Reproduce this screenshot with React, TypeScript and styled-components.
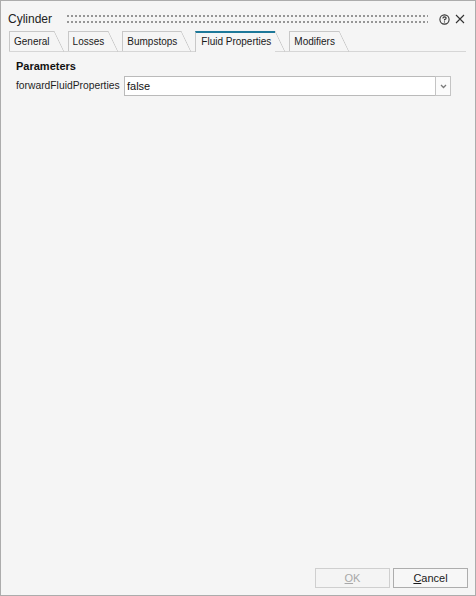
import React from "react";
import styled, { createGlobalStyle } from "styled-components";

const Global = createGlobalStyle`
  html, body { margin: 0; padding: 0; background: #f5f5f5; }
  body { font-family: "Liberation Sans", Arial, sans-serif; }
`;

const Window = styled.div`
  width: 476px;
  height: 596px;
  box-sizing: border-box;
  border: 1px solid #acacac;
  background: #f5f5f5;
  display: flex;
  flex-direction: column;
  color: #1b1b1b;
`;

const TitleBar = styled.div`
  height: 30px;
  box-sizing: border-box;
  padding: 6px 10px 0 7px;
  display: flex;
  align-items: center;
`;

const Title = styled.div`
  font-size: 12px;
  line-height: 16px;
  color: #222;
`;

const Grip = styled.div`
  flex: 1;
  height: 8px;
  margin: 0 11px 0 15px;
  background-image: linear-gradient(to bottom, transparent 2px, #f5f5f5 2px),
    linear-gradient(to right, #969696 2px, transparent 2px);
  background-size: 4px 6px, 4px 6px;
`;

const IconButton = styled.div<{ $size: number }>`
  width: ${(p) => p.$size}px;
  height: 11px;
  display: flex;
  align-items: center;
  justify-content: center;
  & + & { margin-left: 5px; }
`;

const TabStrip = styled.div`
  margin: 0 9px 0 8px;
  display: flex;
  align-items: flex-end;
  border-bottom: 1px solid #d6d6d6;
`;

const Tab = styled.div<{ $active?: boolean }>`
  position: relative;
  box-sizing: border-box;
  height: ${(p) => (p.$active ? "21px" : "20px")};
  margin-bottom: ${(p) => (p.$active ? "-1px" : "0")};
  margin-right: 14px;
  padding: ${(p) => (p.$active ? "2px 4px 0 5px" : "3px 4px 0 4px")};
  border-left: 1px solid #c8c8c8;
  border-top: ${(p) => (p.$active ? "2px solid #1d7899" : "1px solid #c8c8c8")};
  background: #f5f5f5;
  font-size: 10px;
  line-height: 14px;
  color: #1a1a1a;
  white-space: nowrap;
  &::after {
    content: "";
    position: absolute;
    top: ${(p) => (p.$active ? "-2px" : "-1px")};
    right: -10px;
    width: 10px;
    height: 21px;
    background: linear-gradient(
      to top right,
      transparent calc(50% - 0.7px),
      #c8c8c8 50%,
      transparent calc(50% + 0.7px)
    );
  }
`;

const Panel = styled.div`
  flex: 1;
  display: flex;
  flex-direction: column;
  padding: 0 24px 0 15px;
`;

const SectionTitle = styled.div`
  margin-top: 7px;
  font-size: 11px;
  line-height: 14px;
  font-weight: bold;
  color: #111;
`;

const FieldRow = styled.div`
  margin-top: 3px;
  display: grid;
  grid-template-columns: 108px 1fr;
  align-items: center;
`;

const Label = styled.div`
  font-size: 10.3px;
  line-height: 14px;
  color: #1e1e1e;
  white-space: nowrap;
`;

const Select = styled.div`
  height: 20px;
  display: flex;
  box-sizing: border-box;
`;

const Value = styled.div`
  flex: 1;
  box-sizing: border-box;
  border: 1px solid #bababa;
  border-right: none;
  background: #ffffff;
  font-size: 11px;
  line-height: 18px;
  padding-left: 2px;
  color: #111;
`;

const DropButton = styled.div`
  width: 16px;
  box-sizing: border-box;
  border: 1px solid #c4c4c4;
  background: #fbfbfb;
  display: flex;
  align-items: center;
  justify-content: center;
`;

const Footer = styled.div`
  display: flex;
  justify-content: flex-end;
  gap: 3px;
  padding: 0 7px 7px 0;
`;

const Button = styled.div<{ $disabled?: boolean }>`
  width: 75px;
  height: 20px;
  box-sizing: border-box;
  border: 1px solid ${(p) => (p.$disabled ? "#cfcfcf" : "#adadad")};
  background: ${(p) => (p.$disabled ? "#f4f4f4" : "#f7f7f7")};
  color: ${(p) => (p.$disabled ? "#a8a8a8" : "#1a1a1a")};
  font-size: 11px;
  line-height: 18px;
  text-align: center;
  & u { text-decoration-thickness: 1px; text-underline-offset: 1px; }
`;

export default function App() {
  return (
    <>
      <Global />
      <Window>
        <TitleBar>
          <Title>Cylinder</Title>
          <Grip />
          <IconButton $size={11}>
            <svg width="11" height="11" viewBox="0 0 11 11">
              <circle cx="5.5" cy="5.5" r="4.6" fill="none" stroke="#333" strokeWidth="1.1" />
              <path d="M3.9 4.4 Q3.9 2.9 5.5 2.9 Q7.1 2.9 7.1 4.2 Q7.1 5.1 5.5 5.6 L5.5 6.6" fill="none" stroke="#333" strokeWidth="1.1" />
              <rect x="4.95" y="7.4" width="1.1" height="1.1" fill="#333" />
            </svg>
          </IconButton>
          <IconButton $size={10}>
            <svg width="10" height="10" viewBox="0 0 10 10">
              <path d="M1 1 L9 9 M9 1 L1 9" stroke="#333" strokeWidth="1.1" />
            </svg>
          </IconButton>
        </TitleBar>
        <TabStrip>
          <Tab>General</Tab>
          <Tab>Losses</Tab>
          <Tab>Bumpstops</Tab>
          <Tab $active>Fluid Properties</Tab>
          <Tab>Modifiers</Tab>
        </TabStrip>
        <Panel>
          <SectionTitle>Parameters</SectionTitle>
          <FieldRow>
            <Label>forwardFluidProperties</Label>
            <Select>
              <Value>false</Value>
              <DropButton>
                <svg width="7" height="5" viewBox="0 0 7 5">
                  <path d="M1 1 L3.5 3.5 L6 1" fill="none" stroke="#7a7a7a" strokeWidth="1.3" />
                </svg>
              </DropButton>
            </Select>
          </FieldRow>
        </Panel>
        <Footer>
          <Button $disabled>
            <u>O</u>K
          </Button>
          <Button>
            <u>C</u>ancel
          </Button>
        </Footer>
      </Window>
    </>
  );
}
